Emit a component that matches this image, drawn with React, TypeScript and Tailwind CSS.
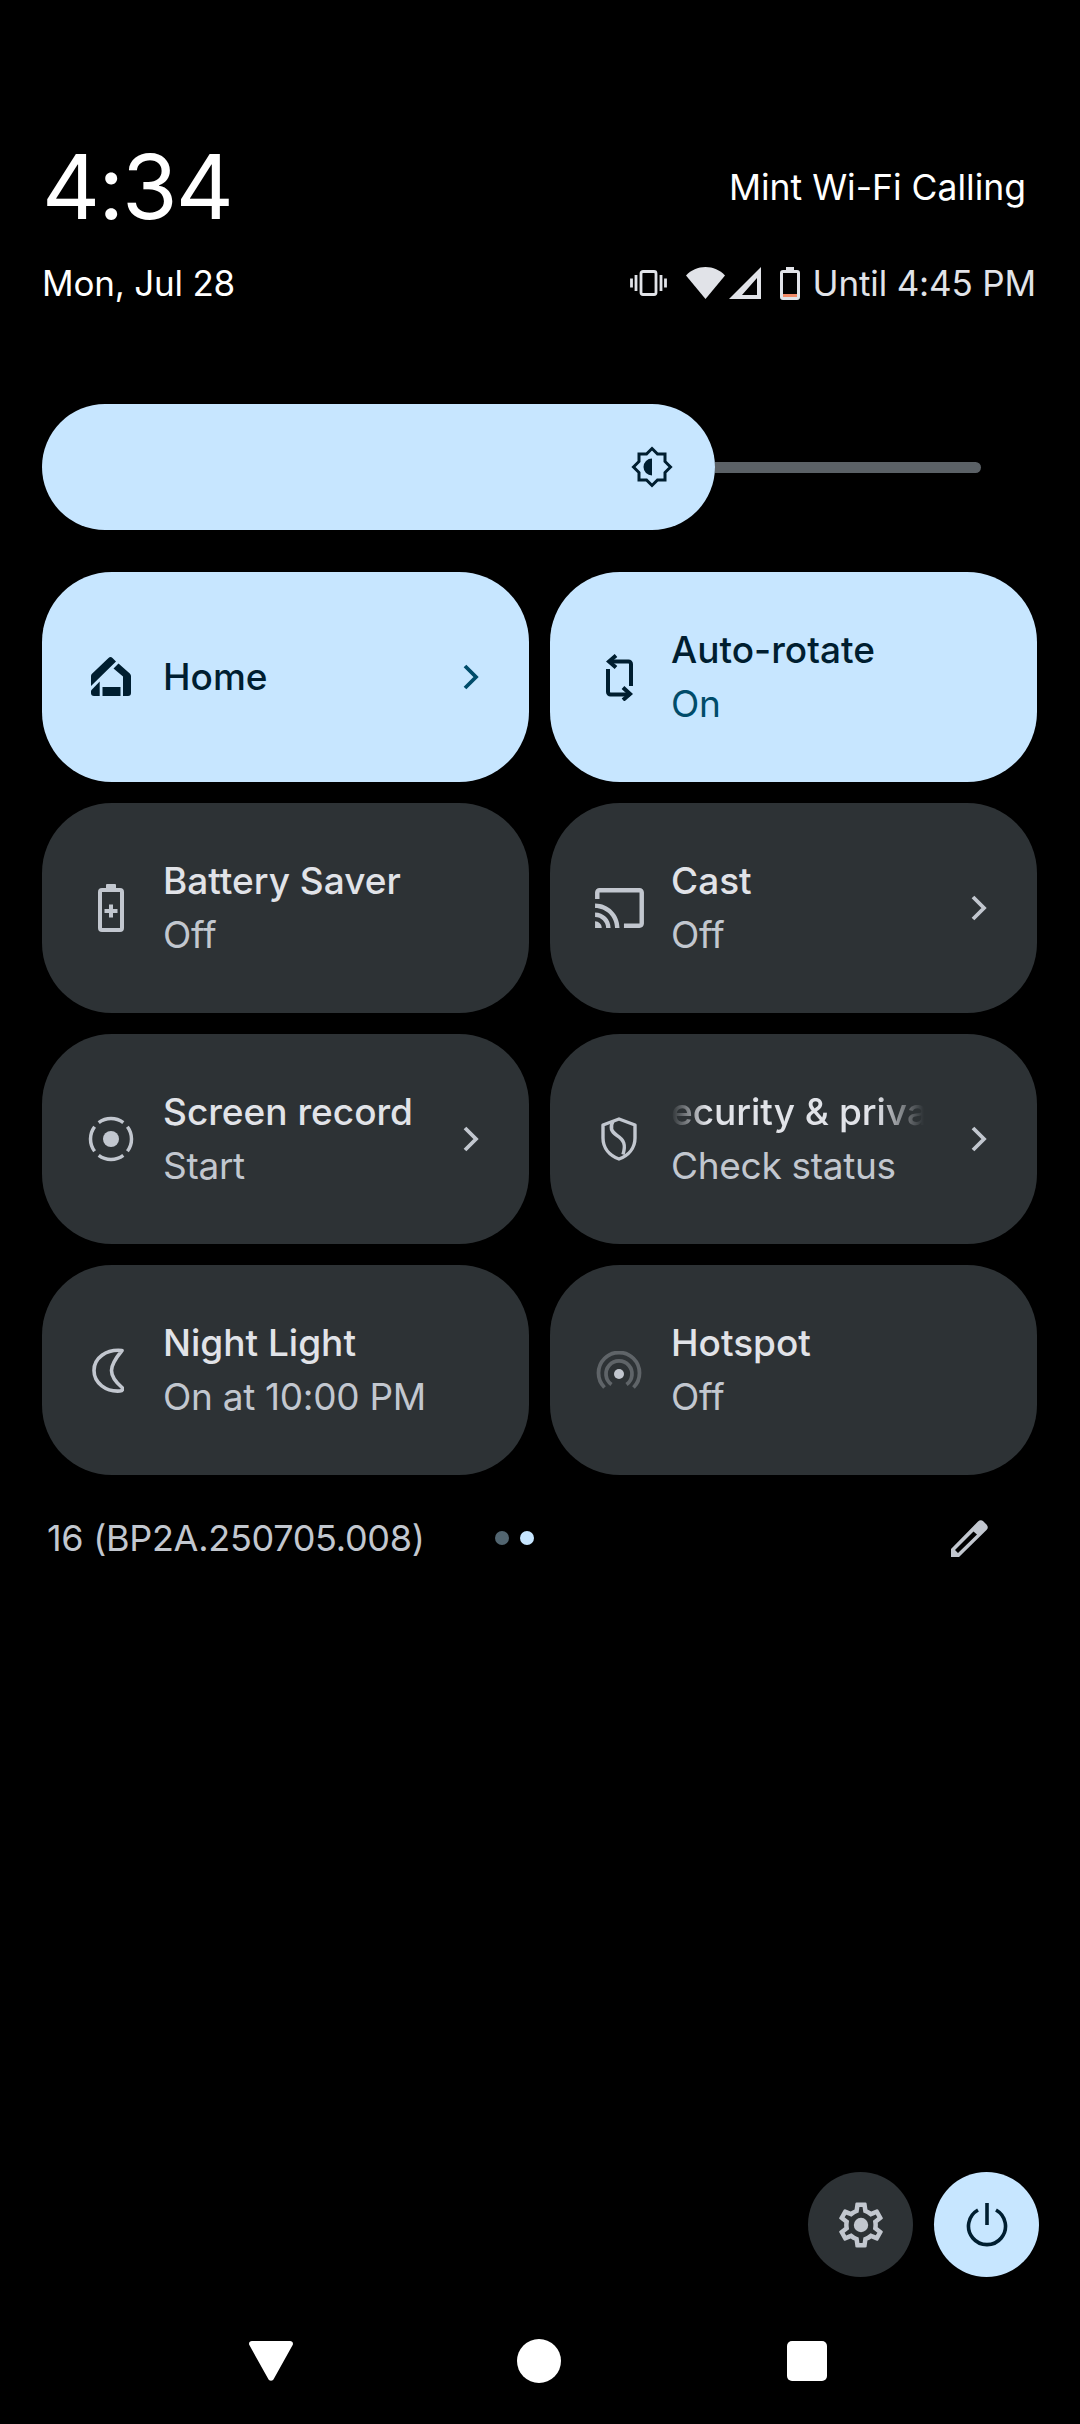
const sans = { fontFamily: '"Inter", "Noto Sans", sans-serif' };

function Chevron({ className }: { className: string }) {
  return (
    <svg viewBox="0 0 18 28" className={`w-[18px] h-[28px] ${className}`} fill="none" stroke="currentColor" strokeWidth="3.800">
      <path d="M3 3l11 11L3 25" />
    </svg>
  );
}

function HomeIcon() {
  return (
    <svg viewBox="0 0 40 40" className="w-[40px] h-[40px]" fill="currentColor">
      <path d="M17.500 1a3 3 0 0 1 4 0l3.500 3.500L0 29V19a3 3 0 0 1 1-2.200z" />
      <path d="M27.500 6.500L38.800 16.500a3.500 3.500 0 0 1 1.200 2.700V36a3 3 0 0 1-3 3h-5V19.500L22.500 11.500z" />
      <path d="M0 33.500L8.700 24.500V39H3a3 3 0 0 1-3-3z" />
      <rect x="11.500" y="30" width="18" height="9" />
    </svg>
  );
}

function RotateIcon() {
  return (
    <svg viewBox="0 0 27 47" className="w-[27px] h-[47px]" fill="none" stroke="currentColor" strokeWidth="4">
      <path d="M2 15v23a2.500 2.500 0 0 0 2.500 2.500H24" />
      <path d="M25 32V10a2.500 2.500 0 0 0-2.500-2.500H3" />
      <path d="M10 1.500L3 7.500l7 6M17 33.500l7 6.500-7 6" />
    </svg>
  );
}

function BatteryPlus() {
  return (
    <svg viewBox="0 0 26 48" className="w-[26px] h-[48px]">
      <path fill="currentColor" d="M8 1a1 1 0 0 1 1-1h8a1 1 0 0 1 1 1v3h4a4 4 0 0 1 4 4v36a4 4 0 0 1-4 4H4a4 4 0 0 1-4-4V8a4 4 0 0 1 4-4h4z" />
      <path fill="#2d3235" d="M4 8h18v36H4z" />
      <path fill="currentColor" d="M11 20.500h4v4.500h4.500v4H15v4.500h-4V29H6.500v-4H11z" />
    </svg>
  );
}

function CastIcon() {
  return (
    <svg viewBox="1 3 22 18" className="w-[49px] h-[40px]" fill="currentColor">
      <path d="M21 3H3c-1.100 0-2 .9-2 2v3h2V5h18v14h-7v2h7c1.100 0 2-.9 2-2V5c0-1.100-.9-2-2-2zM1 18v3h3c0-1.660-1.340-3-3-3zm0-4v2c2.760 0 5 2.240 5 5h2c0-3.870-3.130-7-7-7zm0-4v2c4.970 0 9 4.030 9 9h2c0-6.080-4.930-11-11-11z" />
    </svg>
  );
}

function RecordIcon() {
  return (
    <svg viewBox="0 0 46 46" className="w-[46px] h-[46px]" fill="none" stroke="currentColor" strokeWidth="3.500">
      <circle cx="23" cy="23" r="8" fill="currentColor" stroke="none" />
      <path d="M10.700 6.600A20.500 20.500 0 0 1 35.300 6.600" />
      <path d="M39.400 10.700A20.500 20.500 0 0 1 39.400 35.300" />
      <path d="M35.300 39.400A20.500 20.500 0 0 1 10.700 39.400" />
      <path d="M6.600 35.300A20.500 20.500 0 0 1 6.600 10.700" />
    </svg>
  );
}

function ShieldIcon() {
  return (
    <svg viewBox="0 0 36 44" className="w-[36px] h-[44px]" fill="none" stroke="currentColor" strokeWidth="3.400">
      <path d="M18 2L2 8v13c0 10 6.500 17.500 16 21 9.500-3.500 16-11 16-21V8z" strokeLinejoin="round" />
      <path d="M12 4.500c-3 5-2 10 4 14 7 4.500 9 9 6 19" />
    </svg>
  );
}

function MoonIcon() {
  return (
    <svg viewBox="0 0 32 45" className="mr-[6px] w-[32px] h-[45px]" fill="none" stroke="currentColor" strokeWidth="3.600" strokeLinejoin="round">
      <path d="M30 2.500C14 1 2 10 2 22.500S14 44 28 43c2.500-.2 3.500-2 2-3.500C23 33.500 19.500 28 19.500 22.500S23 11 30 2.500z" />
    </svg>
  );
}

function HotspotIcon() {
  return (
    <svg viewBox="0 0 46 38" className="w-[46px] h-[38px]" fill="none" strokeWidth="3.800">
      <circle cx="23" cy="23" r="5" fill="#c2c7cf" />
      <path stroke="#5f6468" d="M15.500 33.500a13 13 0 1 1 15 0" />
      <path stroke="#5f6468" d="M8.500 36.500a20.500 20.500 0 1 1 29 0" />
    </svg>
  );
}

function Tile({
  icon,
  title,
  sub,
  active,
  chevron,
  marquee,
}: {
  icon: React.ReactNode;
  title: string;
  sub?: string;
  active?: boolean;
  chevron?: boolean;
  marquee?: boolean;
}) {
  return (
    <div
      className={`flex h-[210px] items-center rounded-[70px] pl-[39px] pr-[49px] ${
        active ? "bg-[#c7e6ff] text-[#001e30]" : "bg-[#2d3235] text-[#e1e3e8]"
      }`}
    >
      <div className={`flex w-[60px] shrink-0 items-center justify-center ${active ? "" : "text-[#c2c7cf]"}`}>{icon}</div>
      <div className="ml-[22px] min-w-0 flex-1">
        {marquee ? (
          <div className="w-[253px] overflow-hidden whitespace-nowrap text-[37px] font-medium leading-[54px] [mask-image:linear-gradient(to_right,transparent,black_36px,black_206px,transparent)]">
            <span className="-ml-[24px] block">{title}</span>
          </div>
        ) : (
          <div className="whitespace-nowrap text-[37px] font-medium leading-[54px]">{title}</div>
        )}
        {sub && (
          <div className={`whitespace-nowrap text-[37px] tracking-[-0.3px] leading-[54px] ${active ? "text-[#004c6a]" : "text-[#c2c7cf]"}`}>{sub}</div>
        )}
      </div>
      {chevron && <Chevron className={active ? "text-[#004c6a]" : "text-[#c2c7cf]"} />}
    </div>
  );
}

export default function App() {
  return (
    <div className="flex h-[2424px] w-[1080px] flex-col bg-black text-white" style={sans}>
      {/* header */}
      <div className="flex items-end justify-between pl-[42px] pr-[54px] pt-[132px]">
        <div className="text-[90px] leading-[110px] tracking-[-2px]">4:34</div>
        <div className="pb-[29px] text-[35.500px] leading-[50px]">Mint Wi-Fi Calling</div>
      </div>
      <div className="mt-[16px] flex items-center justify-between pl-[42px] pr-[44px]">
        <div className="text-[35px] leading-[50px] tracking-[-0.2px]">Mon, Jul 28</div>
        <div className="flex items-center text-[#e1e3e8]">
          <svg viewBox="0 0 37 26" className="h-[26px] w-[37px]" fill="none" stroke="currentColor" strokeWidth="2.800">
            <rect x="11" y="1.500" width="15" height="23" rx="2" />
            <path d="M6 5v16M1.500 8.500v9M31 5v16M35.500 8.500v9" />
          </svg>
          <svg viewBox="0 0 39 32" className="ml-[19px] h-[32px] w-[39px]" fill="currentColor">
            <path d="M19.500 32L0 8.500C5 3 12 0 19.500 0S34 3 39 8.500z" />
          </svg>
          <svg viewBox="0 0 32 32" className="ml-[4px] h-[32px] w-[32px]" fill="currentColor">
            <path fillRule="evenodd" d="M32 0v32H0zM28 11L13 28h15z" />
          </svg>
          <svg viewBox="0 0 20 33" className="ml-[19px] h-[33px] w-[20px]">
            <path fill="currentColor" d="M6 0h8v3h3a3 3 0 0 1 3 3v24a3 3 0 0 1-3 3H3a3 3 0 0 1-3-3V6a3 3 0 0 1 3-3h3z" />
            <path fill="#000" d="M3 6h14v24H3z" />
            <path fill="#f28b68" d="M3 27h14v3H3z" />
          </svg>
          <div className="ml-[13px] text-[35px] leading-[50px] tracking-[-0.15px]">Until 4:45 PM</div>
        </div>
      </div>

      {/* brightness */}
      <div className="mt-[96px] flex items-center pl-[42px]">
        <div className="flex h-[126px] w-[673px] items-center justify-end rounded-full bg-[#c7e6ff] pr-[42px] text-[#001e30]">
          <svg viewBox="0 0 42 42" className="h-[42px] w-[42px]" fill="none" stroke="currentColor" strokeWidth="3">
            <path d="M21 2.500l5.500 5.500H34v7.500l5.500 5.500L34 26.500V34h-7.500L21 39.500 15.500 34H8v-7.500L2.500 21 8 15.500V8h7.500z" />
            <path d="M21 12.500a8.500 8.500 0 0 0 0 17z" fill="currentColor" stroke="none" />
          </svg>
        </div>
        <div className="h-[11px] w-[266px] rounded-r-full bg-[#5b6166]" />
      </div>

      {/* tiles */}
      <div className="mt-[42px] grid grid-cols-2 gap-x-[21px] gap-y-[21px] pl-[42px] pr-[43px]">
        <Tile active chevron icon={<HomeIcon />} title="Home" />
        <Tile active icon={<RotateIcon />} title="Auto-rotate" sub="On" />
        <Tile icon={<BatteryPlus />} title="Battery Saver" sub="Off" />
        <Tile chevron icon={<CastIcon />} title="Cast" sub="Off" />
        <Tile chevron icon={<RecordIcon />} title="Screen record" sub="Start" />
        <Tile chevron marquee icon={<ShieldIcon />} title="Security & privacy" sub="Check status" />
        <Tile icon={<MoonIcon />} title="Night Light" sub="On at 10:00 PM" />
        <Tile icon={<HotspotIcon />} title="Hotspot" sub="Off" />
      </div>

      {/* footer row */}
      <div className="mt-[38px] flex items-center pl-[47px] pr-[90px]">
        <div className="w-[448px] text-[36px] leading-[50px] tracking-[-0.3px] text-[#c2c7cf]">16 (BP2A.250705.008)</div>
        <div className="flex gap-[11px]">
          <div className="h-[14px] w-[14px] rounded-full bg-[#526570]" />
          <div className="h-[14px] w-[14px] rounded-full bg-[#c7e6ff]" />
        </div>
        <svg viewBox="0 0 40 40" className="ml-auto h-[40px] w-[40px] text-[#c2c7cf]" fill="currentColor">
          <path fillRule="evenodd" d="M1 39V31L28 3.500a4 4 0 0 1 5.500 0l3 3a4 4 0 0 1 0 5.500L9 39zM23.500 13.500L5 32l3 3L27 16.500z" />
        </svg>
      </div>

      {/* settings / power */}
      <div className="mt-auto flex justify-end gap-[21px] pr-[41px]">
        <div className="flex h-[105px] w-[105px] items-center justify-center rounded-full bg-[#2d3235] text-[#c2c7cf]">
          <svg viewBox="0 0 24 24" className="h-[54px] w-[54px]" fill="currentColor">
            <path d="M19.430 12.980c.04-.32.07-.64.07-.98 0-.34-.03-.66-.07-.98l2.110-1.650c.19-.15.24-.42.12-.64l-2-3.460c-.09-.16-.26-.25-.44-.25-.06 0-.12.01-.17.03l-2.490 1c-.52-.4-1.080-.73-1.690-.98l-.38-2.650C14.460 2.180 14.250 2 14 2h-4c-.25 0-.46.18-.49.42l-.38 2.650c-.61.25-1.170.59-1.690.98l-2.490-1c-.06-.02-.12-.03-.18-.03-.17 0-.34.09-.43.25l-2 3.460c-.13.22-.07.49.12.64l2.110 1.650c-.04.32-.07.65-.07.98 0 .33.03.66.07.98l-2.110 1.650c-.19.15-.24.42-.12.64l2 3.460c.09.16.26.25.44.25.06 0 .12-.01.17-.03l2.490-1c.52.4 1.080.73 1.690.98l.38 2.650c.03.24.24.42.49.42h4c.25 0 .46-.18.49-.42l.38-2.650c.61-.25 1.170-.59 1.690-.98l2.490 1c.06.02.12.03.18.03.17 0 .34-.09.43-.25l2-3.460c.12-.22.07-.49-.12-.64l-2.110-1.650zm-1.980-1.710c.04.31.05.52.05.73 0 .21-.02.43-.05.73l-.14 1.130.89.7 1.080.84-.7 1.210-1.270-.51-1.040-.42-.9.68c-.43.32-.84.56-1.250.73l-1.060.43-.16 1.130-.2 1.350h-1.400l-.19-1.350-.16-1.130-1.060-.43c-.43-.18-.83-.41-1.230-.71l-.91-.7-1.060.43-1.270.51-.7-1.210 1.080-.84.89-.7-.14-1.130c-.03-.31-.05-.54-.05-.74s.02-.43.05-.73l.14-1.130-.89-.7-1.080-.84.7-1.210 1.270.51 1.040.42.9-.68c.43-.32.84-.56 1.250-.73l1.060-.43.16-1.130.2-1.350h1.390l.19 1.350.16 1.130 1.060.43c.43.18.83.41 1.230.71l.91.7 1.060-.43 1.270-.51.7 1.210-1.070.85-.89.7.14 1.130z" />
            <circle cx="12" cy="12" r="3.200" />
          </svg>
        </div>
        <div className="flex h-[105px] w-[105px] items-center justify-center rounded-full bg-[#c7e6ff] text-[#001e30]">
          <svg viewBox="0 0 42 44" className="h-[44px] w-[42px]" fill="none" stroke="currentColor" strokeWidth="3.600">
            <path d="M21 0v22" />
            <path d="M12 7a18.500 18.500 0 1 0 18 0" />
          </svg>
        </div>
      </div>

      {/* nav bar */}
      <div className="mt-[62px] mb-[41px] flex h-[44px] items-center">
        <svg viewBox="0 0 44 40" className="ml-[249px] h-[40px] w-[44px] text-white" fill="currentColor">
          <path d="M3 0h38c2 0 3.500 1.600 2.800 3.800L25 37.500c-1.200 3-4.800 3-6 0L.2 3.800C-.5 1.600 1 0 3 0z" />
        </svg>
        <div className="ml-[224px] h-[44px] w-[44px] rounded-full bg-white" />
        <div className="ml-[226px] h-[40px] w-[40px] rounded-[5px] bg-white" />
      </div>
    </div>
  );
}
